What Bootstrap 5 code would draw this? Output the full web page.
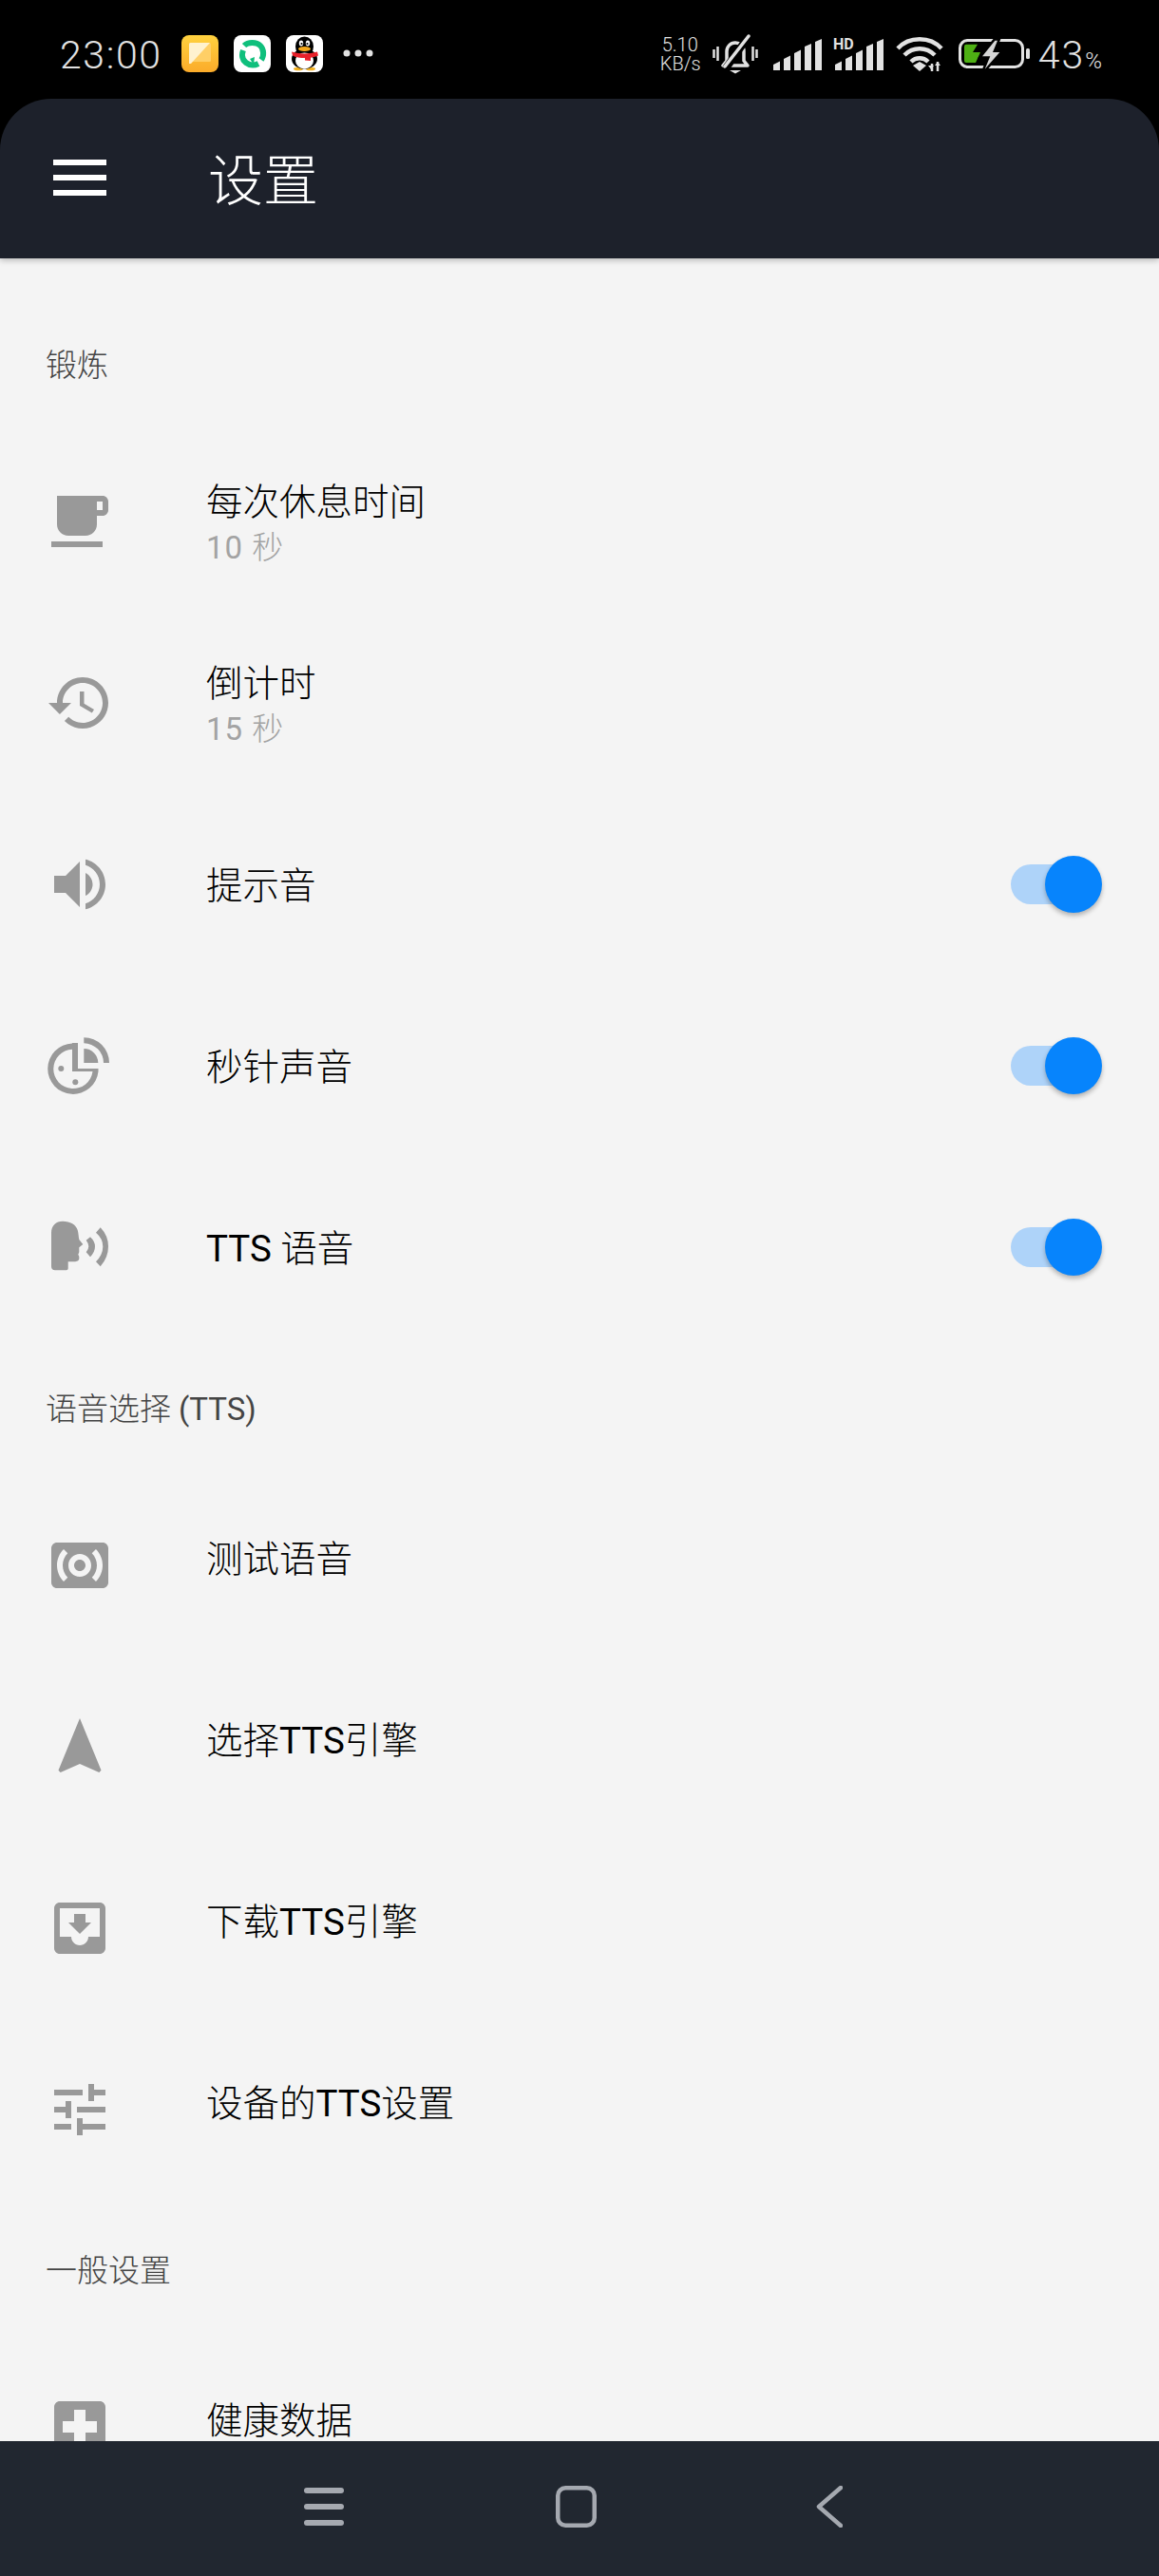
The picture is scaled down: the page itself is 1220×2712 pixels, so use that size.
<!DOCTYPE html>
<html lang="zh-CN">
<head>
    <meta charset="UTF-8">
    <meta name="viewport" content="width=device-width, initial-scale=1.0">
    <title>设置</title>
    <link href="https://cdn.jsdelivr.net/npm/bootstrap@5.3.0/dist/css/bootstrap.min.css" rel="stylesheet">
    <style>
        html, body {
            height: 2712px;
            overflow: hidden;
        }
        body {
            background: #000;
            font-family: Roboto, "Noto Sans CJK SC", sans-serif;
            font-weight: 300;
        }
        .latin-txt { font-weight: 400; }
        .status-strip {
            height: 104px;
            padding: 37px 60px 0 63px;
            color: #e2e2e2;
        }
        .status-time {
            font-size: 41px;
            line-height: 42px;
            width: 128px;
            letter-spacing: 1.6px;
        }
        .status-apps { gap: 16px; }
        .status-apps svg { display: block; }
        .status-dots { margin-left: 4px; }
        .net-speed {
            font-size: 20px;
            line-height: 20px;
            width: 42px;
            text-align: center;
            margin-right: 13px;
        }
        .status-right svg { display: block; flex: none; overflow: visible; }
        .ico-bell { margin-right: 16px; }
        .ico-sig { margin: 4px 14px 0 0; }
        .ico-hd { margin: 4px 13px 0 0; }
        .ico-wifi { margin: 1px 16px 0 0; }
        .ico-batt { margin-top: 4px; }
        .batt-pct {
            font-size: 41px;
            line-height: 42px;
            margin-left: 8px;
            letter-spacing: 2px;
            white-space: nowrap;
        }
        .batt-pct span { font-size: 24px; letter-spacing: 0; }
        .top-bar {
            height: 168px;
            background: #1d212b;
            border-radius: 54px 54px 0 0;
            padding: 0 0 0 56px;
            box-shadow: 0 2px 6px rgba(0,0,0,.25);
            position: relative;
            z-index: 2;
        }
        .menu-lines { width: 56px; gap: 10px; margin-bottom: 2px; }
        .menu-lines i { display: block; height: 6px; background: #fff; }
        .top-title {
            font-size: 58px;
            line-height: 64px;
            color: #fff;
            margin: 6px 0 0 107px;
            font-weight: 300;
        }
        .settings-pane {
            height: 2298px;
            background: #f4f4f4;
            padding-top: 38px;
            overflow: hidden;
        }
        .group-label {
            height: 143.5px;
            padding: 55px 0 0 48px;
            font-size: 33px;
            line-height: 40px;
            color: #444;
        }
        .list-group-item.pref-row {
            height: 191px;
            background: transparent;
            padding: 0 49px 0 48px;
            color: #000;
            border: 0;
        }
        .pref-ico {
            width: 72px;
            height: 72px;
            flex: none;
            margin-right: 97px;
            fill: #999;
        }
        .pref-title {
            font-size: 38.5px;
            line-height: 48px;
            padding-top: 4px;
        }
        .pref-title.lifted {
            line-height: 40px;
            padding-top: 0;
            margin-bottom: 12px;
        }
        .pref-sub {
            font-size: 33px;
            line-height: 40px;
            color: #a3a3a3;
            margin-top: 4px;
            letter-spacing: 1px;
        }
        .toggle-pill {
            position: relative;
            display: block;
            width: 94px;
            height: 42px;
            border-radius: 21px;
            background: #aed3f9;
            margin-right: 13px;
        }
        .toggle-pill::after {
            content: "";
            position: absolute;
            right: -2px;
            top: -9px;
            width: 60px;
            height: 60px;
            border-radius: 50%;
            background: #0784fc;
            box-shadow: 0 3px 5px rgba(0,0,0,.28);
        }
        .sys-nav {
            height: 142px;
            background: #212730;
            padding-bottom: 4px;
        }
        .sys-nav svg { flex: none; }
        .nav-recent { margin-left: 320px; }
        .nav-home { margin-left: 223px; }
        .nav-back { margin-left: 231px; }
    </style>
</head>
<body>
    <div class="status-strip d-flex align-items-start">
        <div class="status-time">23:00</div>
        <div class="status-apps d-flex align-items-start">
            <svg width="39" height="39" viewBox="0 0 39 39">
                <defs><linearGradient id="noteGrad" x1="0" y1="0" x2="0" y2="1"><stop offset="0" stop-color="#ffd23f"/><stop offset="1" stop-color="#fbab2a"/></linearGradient></defs>
                <rect width="39" height="39" rx="8" fill="url(#noteGrad)"/>
                <rect x="8" y="8" width="23" height="20" rx="1.500" fill="#ffcf66"/>
                <path d="M8 30V9.500Q8 8 9.500 8H30L10 30z" fill="#fff2cf"/>
            </svg>
            <svg width="39" height="39" viewBox="0 0 39 39" fill="none">
                <rect width="39" height="39" rx="8" fill="#fff"/>
                <path d="M11 11C15 7 24 7 28 11c4 4 4 11 1 15" stroke="#0fbf7c" stroke-width="6"/>
                <path d="M10 16c-2 5-1 10 3 13 4 3 9 3 13 1" stroke="#0fbf7c" stroke-width="6"/>
                <path d="M17 25l5-2-1 8z" fill="#0fbf7c"/>
            </svg>
            <svg width="39" height="39" viewBox="0 0 39 39">
                <rect width="39" height="39" rx="8" fill="#fff"/>
                <ellipse cx="13" cy="35.500" rx="5" ry="1.800" fill="#f2b01f"/>
                <ellipse cx="26" cy="35.500" rx="5" ry="1.800" fill="#f2b01f"/>
                <ellipse cx="19.500" cy="12" rx="9.500" ry="10.500"/>
                <ellipse cx="19.500" cy="25" rx="13.500" ry="10.500"/>
                <ellipse cx="19.500" cy="27" rx="9.500" ry="8.500" fill="#fff"/>
                <ellipse cx="16" cy="8.500" rx="2.200" ry="3" fill="#fff"/>
                <ellipse cx="23" cy="8.500" rx="2.200" ry="3" fill="#fff"/>
                <circle cx="16.500" cy="9" r="1.100"/><circle cx="22.500" cy="9" r="1.100"/>
                <ellipse cx="19.500" cy="14.500" rx="6.500" ry="2.500" fill="#f5a91b"/>
                <path d="M6 17.500q13.500 4 27 0l1 4q-3 1.500-8 2.300v3.200l-6 -.5v-2.400q-8 0-13-2.600z" fill="#e8202a"/>
            </svg>
            <svg class="status-dots" width="34" height="39" viewBox="0 0 34 39" fill="#e2e2e2">
                <circle cx="5" cy="19" r="3.500"/><circle cx="17" cy="19" r="3.500"/><circle cx="29" cy="19" r="3.500"/>
            </svg>
        </div>
        <div class="status-right d-flex align-items-start ms-auto">
            <div class="net-speed">5.10<br>KB/s</div>
            <svg class="ico-bell" width="48" height="41" viewBox="0 0 48 41" fill="none" stroke="#e2e2e2">
                <path d="M1.500 15v9M5.500 12v15M42.500 12v15M46.500 15v9" stroke-width="2.500"/>
                <path d="M11 32h26l-4-5V17c0-6-4-9-9-9s-9 4-9 9v10z" stroke-width="3.500" stroke-linejoin="round"/>
                <path d="M14 35L38 1" stroke="#000" stroke-width="8"/>
                <path d="M13 33L38 1" stroke-width="3.500" stroke-linecap="round"/>
                <path d="M18 37h12l-6 3.500z" fill="#e2e2e2" stroke="none"/>
            </svg>
            <svg class="ico-sig" width="51" height="33" viewBox="0 0 51 33" fill="#e2e2e2">
                <path d="M0 27l7-3.500V33H0zM11 21l7-3.500V33h-7zM22 15l7-3.500V33h-7zM33 8l7-3V33h-7zM44 3l7-3V33h-7z"/>
            </svg>
            <svg class="ico-hd" width="51" height="33" viewBox="0 0 51 33" fill="#e2e2e2">
                <path d="M0 27l7-3.500V33H0zM11 21l7-3.500V33h-7zM22 15l7-3.500V33h-7zM33 8l7-3V33h-7zM44 3l7-3V33h-7z"/>
                <text x="-2" y="11" font-family="Roboto" font-weight="700" font-size="16">HD</text>
            </svg>
            <svg class="ico-wifi" width="50" height="38" viewBox="0 0 50 38" fill="none" stroke="#e2e2e2" stroke-width="4.500">
                <path d="M2 13C14 0 36 0 48 13"/><path d="M9 20c9-9 23-9 32 0"/><path d="M16 27c5-5 13-5 18 0"/>
                <path d="M18 31l7-4 7 4-7 6z" fill="#e2e2e2" stroke="none"/>
                <path d="M38 37v-8M44 37v-10" stroke-width="2.500"/>
                <path d="M34 31h6l-3 4zM41 31l3-4 3 4z" fill="#e2e2e2" stroke="none"/>
            </svg>
            <svg class="ico-batt" width="76" height="33" viewBox="0 0 76 33">
                <rect x="1.500" y="1.500" width="66" height="28" rx="8" fill="none" stroke="#e2e2e2" stroke-width="3"/>
                <path d="M6 8q0-2.300 2-2.300h12L15 14h8l-5 11H8q-2 0-2-2z" fill="#4eb014"/>
                <path d="M38.300 1.700L25 18.300h8.300L27.700 31.700 43.300 14H36L41 1.700z" fill="#000" stroke="#000" stroke-width="5"/>
                <path d="M38.300 1.700L25 18.300h8.300L27.700 31.700 43.300 14H36L41 1.700z" fill="#d6d6d6"/>
                <rect x="71" y="10" width="4" height="11" rx="1.500" fill="#e2e2e2"/>
            </svg>
            <div class="batt-pct">43<span>%</span></div>
        </div>
    </div>

    <nav class="navbar top-bar flex-nowrap justify-content-start">
        <div class="menu-lines d-flex flex-column"><i></i><i></i><i></i></div>
        <div class="top-title">设置</div>
    </nav>

    <main class="settings-pane">
        <div class="group-label">锻炼</div>
        <div class="list-group list-group-flush">
            <div class="list-group-item pref-row d-flex align-items-center">
                <svg class="pref-ico" viewBox="0 0 24 24"><path d="M20 3H4v10c0 2.210 1.790 4 4 4h6c2.210 0 4-1.790 4-4v-3h2c1.110 0 2-.89 2-2V5c0-1.110-.89-2-2-2zm0 5h-2V5h2v3zM2 21h18v-2H2v2z"/></svg>
                <div>
                    <div class="pref-title">每次休息时间</div>
                    <div class="pref-sub"><span class="latin-txt">10</span> 秒</div>
                </div>
            </div>
            <div class="list-group-item pref-row d-flex align-items-center">
                <svg class="pref-ico" viewBox="0 0 24 24"><path d="M13 3c-4.970 0-9 4.030-9 9H1l3.890 3.890.07.14L9 12H6c0-3.870 3.130-7 7-7s7 3.130 7 7-3.130 7-7 7c-1.930 0-3.680-.79-4.940-2.060l-1.420 1.420C8.270 19.990 10.510 21 13 21c4.970 0 9-4.030 9-9s-4.030-9-9-9zm-1 5v5l4.280 2.540.72-1.210-3.500-2.080V8H12z"/></svg>
                <div>
                    <div class="pref-title">倒计时</div>
                    <div class="pref-sub"><span class="latin-txt">15</span> 秒</div>
                </div>
            </div>
            <div class="list-group-item pref-row d-flex align-items-center">
                <svg class="pref-ico" viewBox="0 0 24 24"><path d="M3 9v6h4l5 5V4L7 9H3zm13.500 3c0-1.770-1.020-3.290-2.500-4.030v8.050c1.480-.73 2.500-2.250 2.500-4.020zM14 3.230v2.060c2.890.86 5 3.540 5 6.710s-2.110 5.850-5 6.710v2.060c4.010-.91 7-4.490 7-8.770s-2.990-7.860-7-8.770z"/></svg>
                <div class="pref-title">提示音</div>
                <span class="toggle-pill ms-auto"></span>
            </div>
            <div class="list-group-item pref-row d-flex align-items-center">
                <svg class="pref-ico" viewBox="0 0 72 72">
                    <path d="M28 12.500v6.200a20.700 20.700 0 1 0 21.500 23.300h6a26.700 26.700 0 1 1-27.500-29.500z"/>
                    <path d="M34 12h-6v30h27.500v-3H34z"/>
                    <path d="M40.300 6.300a26.700 26.700 0 0 1 26.700 26.700h-6a20.700 20.700 0 0 0-20.700-20.700z"/>
                    <path d="M40.300 18a15 15 0 0 1 15 15h-15z"/>
                    <circle cx="16.300" cy="39" r="3"/><circle cx="31.300" cy="53.300" r="3"/>
                </svg>
                <div class="pref-title">秒针声音</div>
                <span class="toggle-pill ms-auto"></span>
            </div>
            <div class="list-group-item pref-row d-flex align-items-center">
                <svg class="pref-ico" viewBox="0 0 72 72">
                    <path d="M6 21c0-8 5-12.300 12-12.300 8 0 14 3.500 15.700 9.300.8 3 1 6.500 1.600 10l4 5-4 3.300v5l-1 2.500 1 2.200v2c0 2.300-2.500 3.300-5 3.300h-6.600v7c0 1.300-.7 1.900-2 1.900H10c-2.500 0-4-1.500-4-4z"/>
                    <path d="M42.700 28.700L47 25.300Q52 30 52 35.300 52 41 47 46.300L42.700 41.300Q45.300 38 45.300 35.300 45.300 32 42.700 28.700z"/>
                    <path d="M53 20.700L57.700 15.300Q66 24 66 35.300 66 47 57.700 56.300L53 51.300Q60.300 44 60.300 35.300 60.300 27 53 20.700z"/>
                </svg>
                <div class="pref-title"><span class="latin-txt">TTS</span> 语音</div>
                <span class="toggle-pill ms-auto"></span>
            </div>
        </div>

        <div class="group-label">语音选择 <span class="latin-txt">(TTS)</span></div>
        <div class="list-group list-group-flush">
            <div class="list-group-item pref-row d-flex align-items-center">
                <svg class="pref-ico" viewBox="0 0 24 24"><path d="M20 4H4c-1.100 0-2 .9-2 2v12c0 1.100.9 2 2 2h16c1.100 0 2-.9 2-2V6c0-1.100-.9-2-2-2zM7.760 16.240l-1.410 1.410C4.780 16.100 4 14.050 4 12c0-2.050.78-4.100 2.340-5.660l1.410 1.410C6.590 8.930 6 10.460 6 12s.59 3.070 1.760 4.240zM12 16c-2.210 0-4-1.790-4-4s1.790-4 4-4 4 1.790 4 4-1.790 4-4 4zm5.660 1.660l-1.410-1.410C17.410 15.070 18 13.540 18 12s-.59-3.070-1.760-4.240l1.410-1.410C19.220 7.900 20 9.950 20 12c0 2.050-.78 4.100-2.340 5.660zM12 10c-1.100 0-2 .9-2 2s.9 2 2 2 2-.9 2-2-.9-2-2-2z"/></svg>
                <div class="pref-title lifted">测试语音</div>
            </div>
            <div class="list-group-item pref-row d-flex align-items-center">
                <svg class="pref-ico" viewBox="0 0 24 24"><path d="M12 2L4.500 20.290l.71.71L12 18l6.790 3 .71-.71z"/></svg>
                <div class="pref-title lifted">选择<span class="latin-txt">TTS</span>引擎</div>
            </div>
            <div class="list-group-item pref-row d-flex align-items-center">
                <svg class="pref-ico" viewBox="0 0 24 24"><path d="M19 3H4.990c-1.110 0-1.980.89-1.980 2L3 19c0 1.100.88 2 1.990 2H19c1.100 0 2-.9 2-2V5c0-1.110-.9-2-2-2zm0 12h-4c0 1.660-1.350 3-3 3s-3-1.340-3-3H4.990V5H19v10zm-3-5h-2V7h-4v3H8l4 4 4-4z"/></svg>
                <div class="pref-title lifted">下载<span class="latin-txt">TTS</span>引擎</div>
            </div>
            <div class="list-group-item pref-row d-flex align-items-center">
                <svg class="pref-ico" viewBox="0 0 24 24"><path d="M3 17v2h6v-2H3zM3 5v2h10V5H3zm10 16v-2h8v-2h-8v-2h-2v6h2zM7 9v2H3v2h4v2h2V9H7zm14 4v-2H11v2h10zm-6-4h2V7h4V5h-4V3h-2v6z"/></svg>
                <div class="pref-title lifted">设备的<span class="latin-txt">TTS</span>设置</div>
            </div>
        </div>

        <div class="group-label">一般设置</div>
        <div class="list-group list-group-flush">
            <div class="list-group-item pref-row d-flex align-items-center">
                <svg class="pref-ico" viewBox="0 0 24 24"><path d="M19 3H5c-1.100 0-1.990.9-1.990 2L3 19c0 1.100.9 2 2 2h14c1.100 0 2-.9 2-2V5c0-1.100-.9-2-2-2zm-1 11h-4v4h-4v-4H6v-4h4V6h4v4h4v4z"/></svg>
                <div class="pref-title lifted">健康数据</div>
            </div>
        </div>
    </main>

    <div class="sys-nav d-flex align-items-center">
        <svg class="nav-recent" width="42" height="40" viewBox="0 0 42 40" fill="#a5a9b0">
            <rect width="42" height="6" y="0" rx="3"/><rect width="42" height="6" y="17" rx="3"/><rect width="42" height="6" y="34" rx="3"/>
        </svg>
        <svg class="nav-home" width="43" height="44" viewBox="0 0 43 44" fill="none" stroke="#a5a9b0" stroke-width="4.500">
            <rect x="2.250" y="2.250" width="38.500" height="39.500" rx="8"/>
        </svg>
        <svg class="nav-back" width="28" height="44" viewBox="0 0 28 44" fill="none" stroke="#a5a9b0" stroke-width="4.500" stroke-linecap="round" stroke-linejoin="round">
            <path d="M26 2L3 22l23 20"/>
        </svg>
    </div>
    <script src="https://cdn.jsdelivr.net/npm/bootstrap@5.3.0/dist/js/bootstrap.bundle.min.js"></script>
</body>
</html>
